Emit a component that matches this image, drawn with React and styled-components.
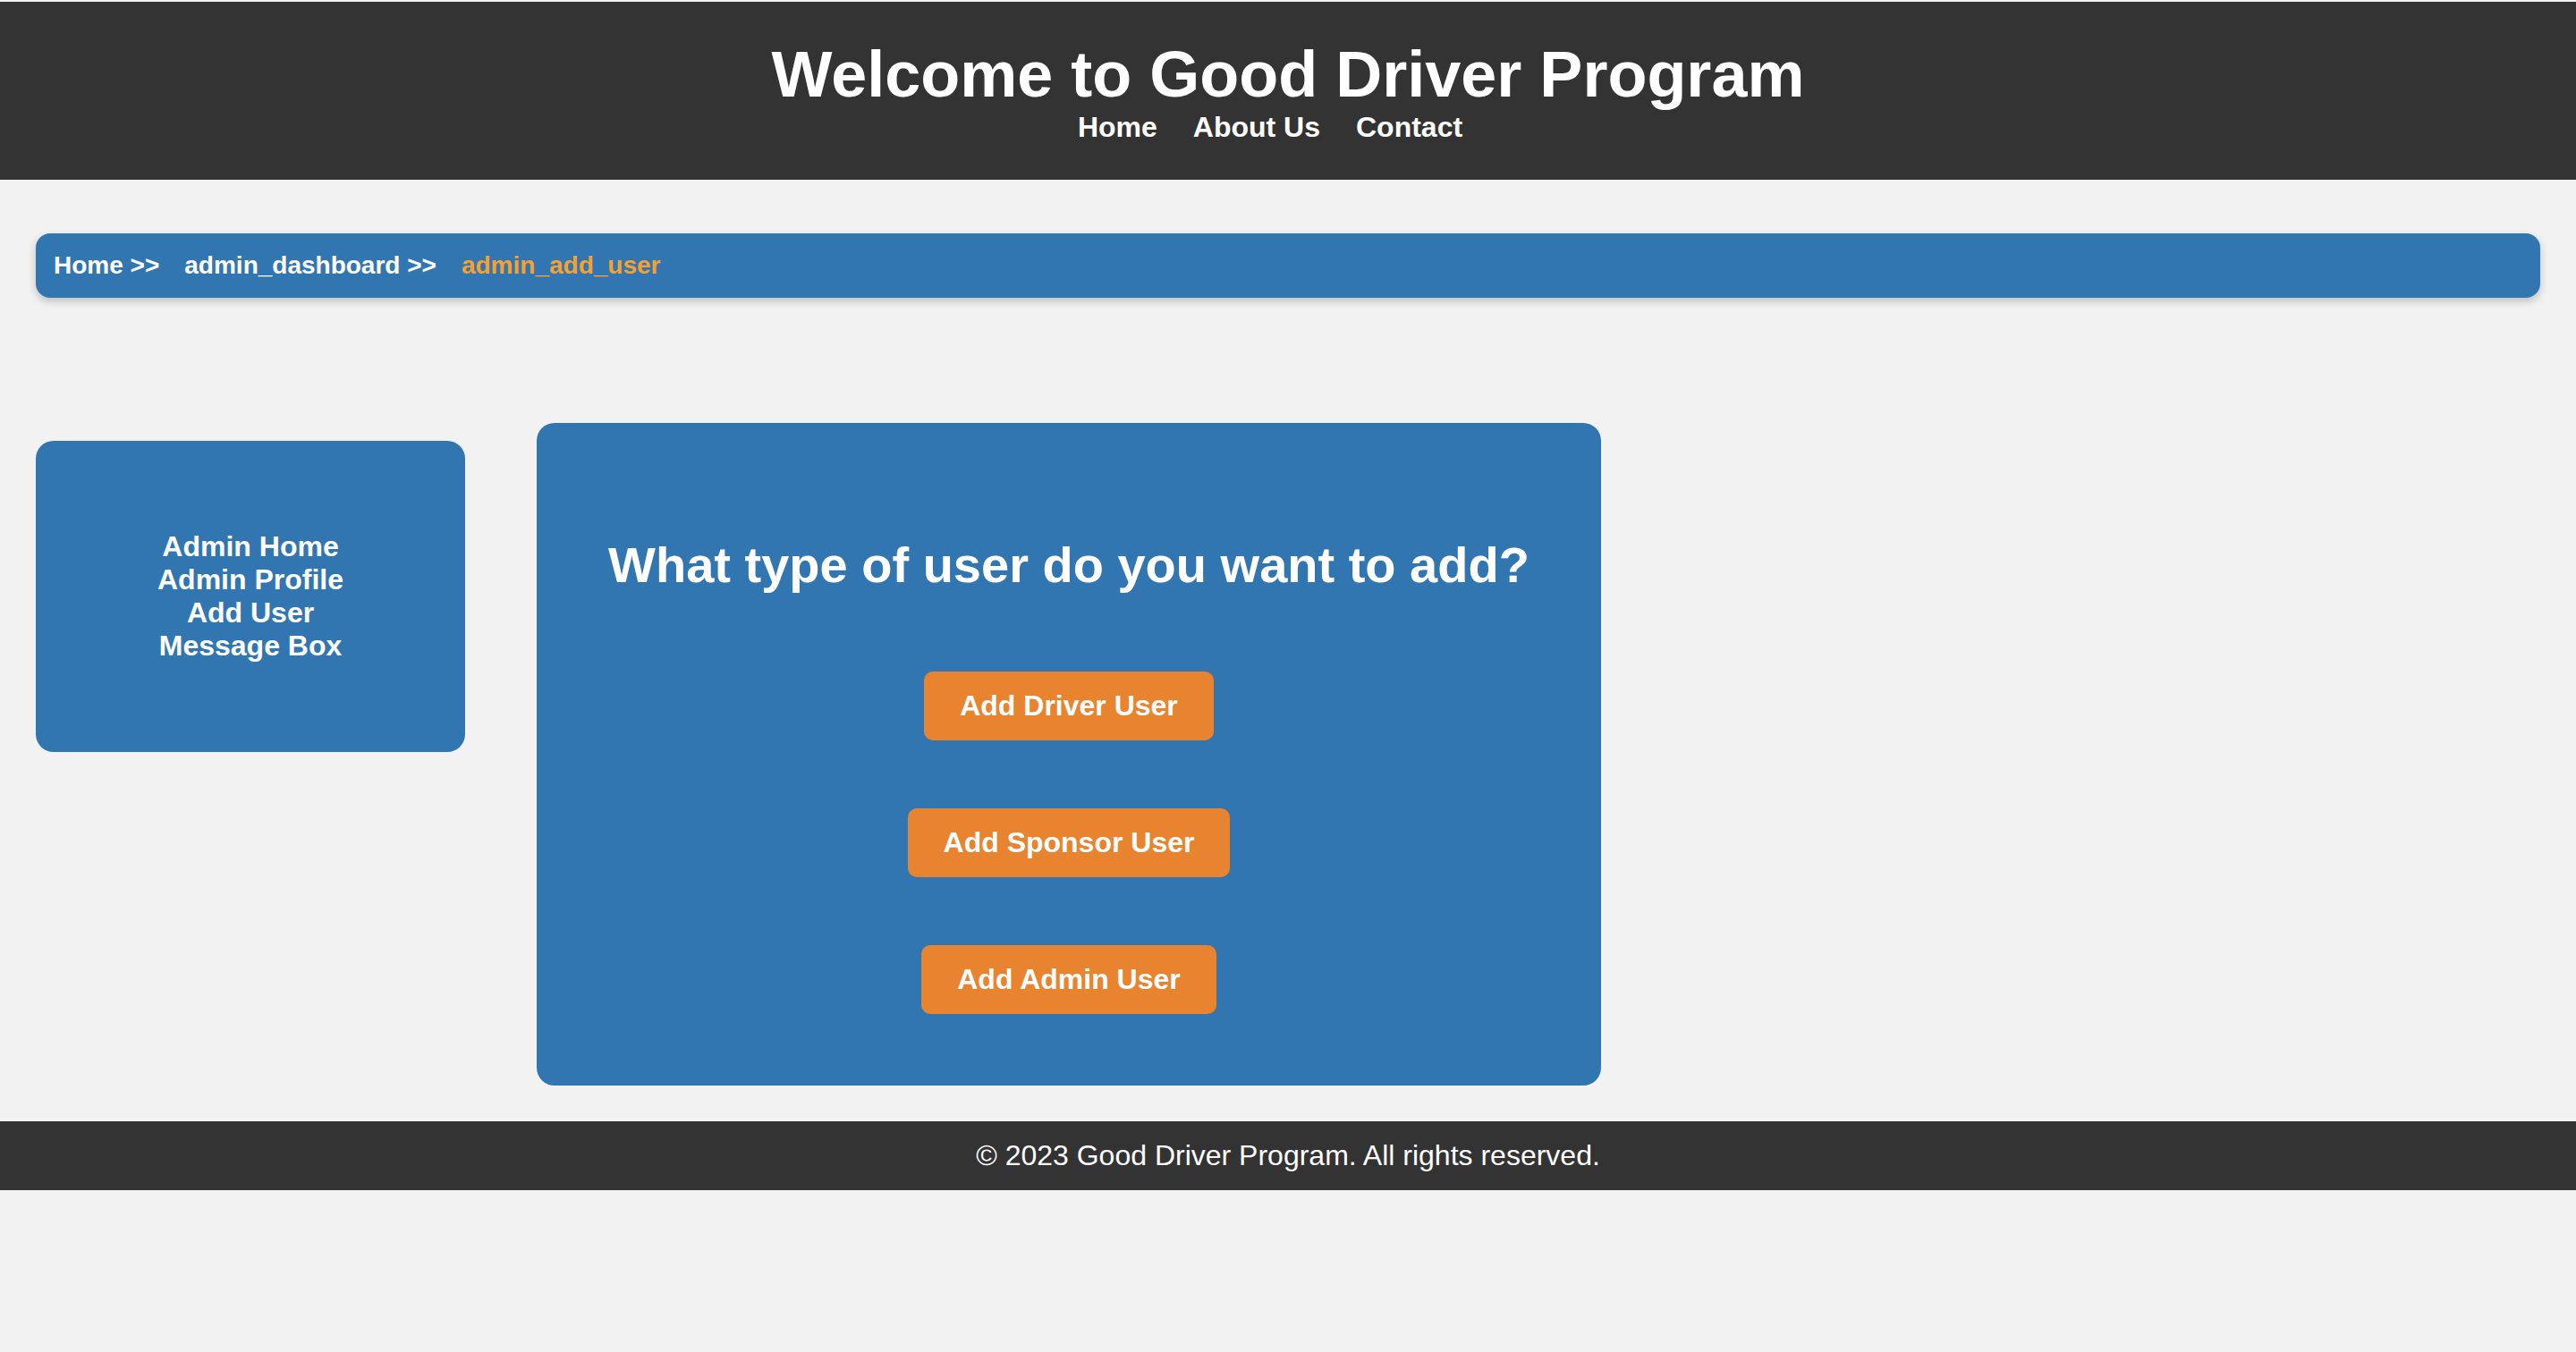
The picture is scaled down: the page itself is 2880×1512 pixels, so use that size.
import React from "react";
import styled, { createGlobalStyle } from "styled-components";

const GlobalStyle = createGlobalStyle`
  html, body {
    margin: 0;
    padding: 0;
    background: #f2f2f2;
    font-family: "Liberation Sans", Arial, Helvetica, sans-serif;
  }
  * { box-sizing: border-box; }
`;

const Page = styled.div`
  padding-top: 2px;
  min-height: 1512px;
  background: #f2f2f2;
`;

const Header = styled.header`
  background: #333333;
  color: #ffffff;
  padding: 40px 0;
  text-align: center;
`;

const Title = styled.h1`
  margin: 0;
  font-size: 72px;
  font-weight: 700;
  line-height: normal;
`;

const Nav = styled.nav`
  display: flex;
  justify-content: center;
`;

const NavLink = styled.a`
  color: #ffffff;
  text-decoration: none;
  font-size: 32px;
  font-weight: 700;
  line-height: normal;
  margin-right: 40px;
`;

const Breadcrumb = styled.div`
  margin: 60px 40px 0;
  height: 72px;
  background: #3276b1;
  border-radius: 16px;
  box-shadow: 0 4px 10px rgba(0, 0, 0, 0.22);
  display: flex;
  align-items: center;
  gap: 28px;
  padding: 0 20px;
  font-size: 28px;
  font-weight: 700;
`;

const Crumb = styled.span`
  color: ${(p) => (p.$active ? "#f5a130" : "#ffffff")};
`;

const Content = styled.main`
  display: flex;
  align-items: flex-start;
  gap: 80px;
  margin: 140px 40px 0;
`;

const Sidebar = styled.aside`
  width: 480px;
  margin-top: 20px;
  padding: 100px 20px;
  background: #3276b1;
  border-radius: 20px;
  text-align: center;
`;

const SideLink = styled.a`
  display: block;
  color: #ffffff;
  text-decoration: none;
  font-size: 32px;
  font-weight: 700;
  line-height: normal;
`;

const Panel = styled.section`
  width: 1190px;
  padding: 126px 40px 80px;
  background: #3276b1;
  border-radius: 20px;
  text-align: center;
`;

const PanelTitle = styled.h2`
  margin: 0 0 87px;
  color: #ffffff;
  font-size: 56px;
  font-weight: 700;
  line-height: normal;
`;

const ButtonStack = styled.div`
  display: flex;
  flex-direction: column;
  align-items: center;
  gap: 76px;
`;

const ActionButton = styled.button`
  background: #e8842f;
  color: #ffffff;
  border: none;
  border-radius: 10px;
  padding: 20px 40px;
  font-family: "Liberation Sans", Arial, Helvetica, sans-serif;
  font-size: 32px;
  font-weight: 700;
  line-height: normal;
  cursor: pointer;
`;

const Footer = styled.footer`
  margin-top: 40px;
  background: #333333;
  color: #ffffff;
  padding: 20px 0;
  text-align: center;
  font-size: 32px;
  line-height: normal;
`;

export default function App() {
  return (
    <Page>
      <GlobalStyle />
      <Header>
        <Title>Welcome to Good Driver Program</Title>
        <Nav>
          <NavLink href="#">Home</NavLink>
          <NavLink href="#">About Us</NavLink>
          <NavLink href="#">Contact</NavLink>
        </Nav>
      </Header>
      <Breadcrumb>
        <Crumb>Home &gt;&gt;</Crumb>
        <Crumb>admin_dashboard &gt;&gt;</Crumb>
        <Crumb $active>admin_add_user</Crumb>
      </Breadcrumb>
      <Content>
        <Sidebar>
          <SideLink href="#">Admin Home</SideLink>
          <SideLink href="#">Admin Profile</SideLink>
          <SideLink href="#">Add User</SideLink>
          <SideLink href="#">Message Box</SideLink>
        </Sidebar>
        <Panel>
          <PanelTitle>What type of user do you want to add?</PanelTitle>
          <ButtonStack>
            <ActionButton>Add Driver User</ActionButton>
            <ActionButton>Add Sponsor User</ActionButton>
            <ActionButton>Add Admin User</ActionButton>
          </ButtonStack>
        </Panel>
      </Content>
      <Footer>© 2023 Good Driver Program. All rights reserved.</Footer>
    </Page>
  );
}
